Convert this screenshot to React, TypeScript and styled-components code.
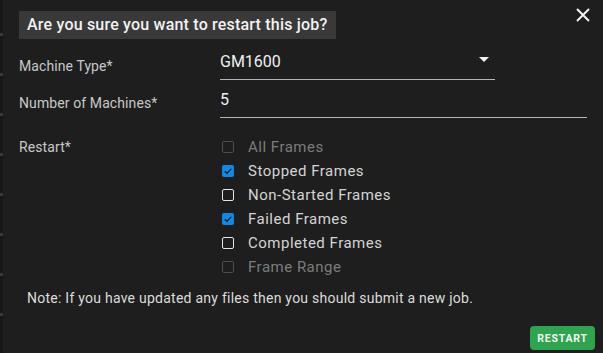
import React from "react";
import styled, { createGlobalStyle } from "styled-components";

const GlobalStyle = createGlobalStyle`
  body {
    margin: 0;
    background: #1e1e1e;
    font-family: Roboto, "Liberation Sans", sans-serif;
  }
`;

const Shell = styled.div`
  display: flex;
  width: 603px;
  height: 353px;
  overflow: hidden;
  background: #1e1e1e;
`;

const Rail = styled.div`
  width: 3px;
  background: #171717;
  background-image: repeating-linear-gradient(
    to bottom,
    transparent 0px,
    transparent 33px,
    #3a3a3a 33px,
    #3a3a3a 36px,
    transparent 36px,
    transparent 40px
  );
`;

const Dialog = styled.div`
  position: relative;
  flex: 1;
  display: flex;
  flex-direction: column;
  padding: 11px 8px 0 16px;
`;

const Title = styled.h2`
  align-self: flex-start;
  margin: 0;
  height: 28px;
  padding: 0 8px;
  background: #393939;
  color: #f2f2f2;
  font-size: 16px;
  font-weight: 500;
  line-height: 28px;
  letter-spacing: 0.2px;
`;

const CloseButton = styled.button`
  position: absolute;
  top: 7px;
  right: 12px;
  width: 16px;
  height: 16px;
  padding: 0;
  border: none;
  background: none;
  cursor: pointer;
  display: flex;
  align-items: center;
  justify-content: center;
`;

const Form = styled.div`
  display: flex;
  flex-direction: column;
  gap: 5px;
  margin-top: 8px;
  padding-right: 8px;
`;

const Row = styled.div`
  display: flex;
  align-items: flex-start;
`;

const Label = styled.label<{ $top?: number }>`
  width: 201px;
  flex-shrink: 0;
  padding-top: ${(p) => p.$top ?? 9}px;
  color: #c8c8c8;
  font-size: 14px;
  line-height: 20px;
  letter-spacing: 0.1px;
`;

const Field = styled.div<{ $width?: number }>`
  display: flex;
  align-items: center;
  justify-content: space-between;
  width: ${(p) => (p.$width ? `${p.$width}px` : "auto")};
  flex: ${(p) => (p.$width ? "none" : 1)};
  padding: 5px 0 7px;
  border-bottom: 1px solid #b5b5b5;
  color: #f0f0f0;
  font-size: 16px;
  line-height: 20px;
`;

const Arrow = styled.span`
  width: 0;
  height: 0;
  margin-right: 6px;
  margin-top: -5px;
  border-left: 5px solid transparent;
  border-right: 5px solid transparent;
  border-top: 5px solid #f0f0f0;
`;

const CheckList = styled.div`
  display: flex;
  flex-direction: column;
  margin-top: 12px;
  margin-left: 2px;
`;

const CheckRow = styled.div<{ $disabled?: boolean }>`
  display: flex;
  align-items: center;
  gap: 14px;
  height: 24px;
  color: ${(p) => (p.$disabled ? "#7c7c7c" : "#d4d4d4")};
  font-size: 15px;
  letter-spacing: 0.5px;
`;

const Box = styled.span<{ $checked?: boolean; $disabled?: boolean }>`
  box-sizing: border-box;
  width: 12px;
  height: 12px;
  border-radius: 2px;
  display: flex;
  align-items: center;
  justify-content: center;
  background: ${(p) => (p.$checked ? "#1088e8" : "transparent")};
  border: ${(p) =>
    p.$checked ? "none" : p.$disabled ? "1.5px solid #4e4e4e" : "1.5px solid #e6e6e6"};
`;

const Note = styled.p`
  margin: 9px 0 0 8px;
  color: #dcdcdc;
  font-size: 14px;
  line-height: 20px;
  letter-spacing: 0.25px;
`;

const Footer = styled.div`
  display: flex;
  justify-content: flex-end;
  margin-top: 18px;
`;

const RestartButton = styled.button`
  width: 65px;
  height: 24px;
  padding: 0;
  border: none;
  border-radius: 4px;
  background: #2ea44f;
  color: #f4f4f4;
  font-family: Roboto, "Liberation Sans", sans-serif;
  font-size: 10.5px;
  font-weight: 700;
  letter-spacing: 0.8px;
  cursor: pointer;
`;

const options = [
  { label: "All Frames", checked: false, disabled: true },
  { label: "Stopped Frames", checked: true },
  { label: "Non-Started Frames", checked: false },
  { label: "Failed Frames", checked: true },
  { label: "Completed Frames", checked: false },
  { label: "Frame Range", checked: false, disabled: true },
];

const App = () => {
  return (
    <>
      <GlobalStyle />
      <Shell>
        <Rail />
        <Dialog>
          <Title>Are you sure you want to restart this job?</Title>
          <CloseButton aria-label="close">
            <svg width="14" height="14" viewBox="0 0 14 14">
              <path d="M1 1L13 13M13 1L1 13" stroke="#f4f4f4" strokeWidth="2" />
            </svg>
          </CloseButton>
          <Form>
            <Row>
              <Label>Machine Type*</Label>
              <Field $width={275}>
                <span>GM1600</span>
                <Arrow />
              </Field>
            </Row>
            <Row>
              <Label $top={8}>Number of Machines*</Label>
              <Field>5</Field>
            </Row>
            <Row>
              <Label $top={14}>Restart*</Label>
              <CheckList>
                {options.map((o) => (
                  <CheckRow key={o.label} $disabled={o.disabled}>
                    <Box $checked={o.checked} $disabled={o.disabled}>
                      {o.checked && (
                        <svg width="10" height="10" viewBox="0 0 10 10">
                          <path
                            d="M1.8 5.2L4 7.3L8.3 2.8"
                            fill="none"
                            stroke="#10243a"
                            strokeWidth="1.4"
                          />
                        </svg>
                      )}
                    </Box>
                    <span>{o.label}</span>
                  </CheckRow>
                ))}
              </CheckList>
            </Row>
          </Form>
          <Note>Note: If you have updated any files then you should submit a new job.</Note>
          <Footer>
            <RestartButton>RESTART</RestartButton>
          </Footer>
        </Dialog>
      </Shell>
    </>
  );
};

export default App;
